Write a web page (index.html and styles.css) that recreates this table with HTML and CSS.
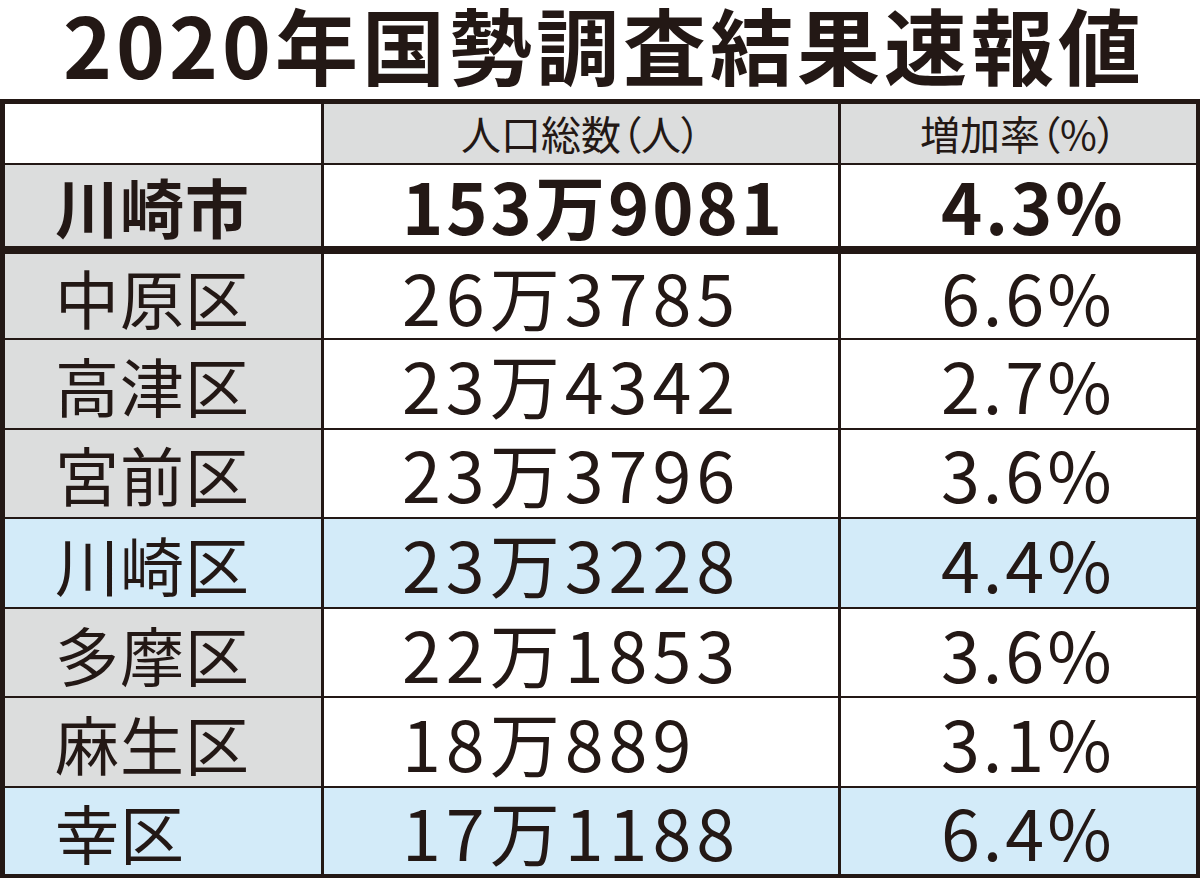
FILE: index.html
```html
<!DOCTYPE html>
<html lang="ja">
<head>
  <meta charset="UTF-8">
  <meta name="viewport" content="width=device-width, initial-scale=1.0">
  <title>2020年国勢調査結果速報値</title>
  <link rel="stylesheet" href="styles.css">
</head>
<body>

  <!-- Title -->
  <h1 class="title">2020年国勢調査結果速報値</h1>

  <!-- Result table -->
  <table class="census">
    <colgroup>
      <col class="col-name">
      <col class="col-pop">
      <col class="col-rate">
    </colgroup>
    <thead>
      <tr>
        <th class="blank"></th>
        <th>人口総数（人）</th>
        <th>増加率（%）</th>
      </tr>
    </thead>
    <tbody>
      <tr class="total">
        <td class="name">川崎市</td>
        <td class="pop">153万9081</td>
        <td class="rate">4.3%</td>
      </tr>
      <tr>
        <td class="name">中原区</td>
        <td class="pop">26万3785</td>
        <td class="rate">6.6%</td>
      </tr>
      <tr>
        <td class="name">高津区</td>
        <td class="pop">23万4342</td>
        <td class="rate">2.7%</td>
      </tr>
      <tr>
        <td class="name">宮前区</td>
        <td class="pop">23万3796</td>
        <td class="rate">3.6%</td>
      </tr>
      <tr class="mark">
        <td class="name">川崎区</td>
        <td class="pop">23万3228</td>
        <td class="rate">4.4%</td>
      </tr>
      <tr>
        <td class="name">多摩区</td>
        <td class="pop">22万1853</td>
        <td class="rate">3.6%</td>
      </tr>
      <tr>
        <td class="name">麻生区</td>
        <td class="pop">18万889</td>
        <td class="rate">3.1%</td>
      </tr>
      <tr class="mark">
        <td class="name">幸区</td>
        <td class="pop">17万1188</td>
        <td class="rate">6.4%</td>
      </tr>
    </tbody>
  </table>

</body>
</html>
```

FILE: styles.css
```css
:root {
  --color-ink: #231815;
  --color-grey: #dcdddd;
  --color-blue: #d3ebf9;
  --color-white: #fff;
}

*, *::before, *::after {
  margin: 0; padding: 0; box-sizing: border-box;
}
body {
  font-family: "Noto Sans CJK JP", "Noto Sans", sans-serif;
  color: var(--color-ink);
  background: var(--color-white);
  width: 1200px;
}

.title {
  height: 99px;
  font-size: 83px;
  font-weight: 700;
  line-height: 86px;
  letter-spacing: 4px;
  text-align: center;
  white-space: nowrap;
  padding-left: 8px;
}

.census {
  width: 1200px;
  border-collapse: collapse;
  border: 5px solid var(--color-ink);
  border-right-width: 4px;
  table-layout: fixed;
}
.col-name { width: 320px; }
.col-pop { width: 517px; }

.census th,
.census td {
  border-top: 2px solid var(--color-ink);
  border-bottom: 2px solid var(--color-ink);
  border-left: 3px solid var(--color-ink);
  border-right: 3px solid var(--color-ink);
  white-space: nowrap;
}

.census th {
  height: 62px;
  background: var(--color-grey);
  font-size: 40px;
  font-weight: 400;
  font-feature-settings: "palt";
  text-align: center;
  line-height: 1;
}
.census th.blank {
  background: var(--color-white);
}

.census td {
  height: 89.6px;
  background: var(--color-white);
  text-align: left;
  line-height: 1;
}
.census td.name {
  background: var(--color-grey);
  font-size: 64px;
  letter-spacing: 1px;
  padding-left: 50px;
}
.census td.pop {
  font-size: 70px;
  letter-spacing: 5px;
  padding-left: 78px;
}
.census td.rate {
  font-size: 70px;
  letter-spacing: 3px;
  padding-left: 100px;
}

.census tr.total td {
  height: 86px;
  font-weight: 700;
  border-bottom-width: 8px;
}
.census tr.total td.pop {
  letter-spacing: 3px;
}
.census tr.mark td {
  background: var(--color-blue);
}
```
